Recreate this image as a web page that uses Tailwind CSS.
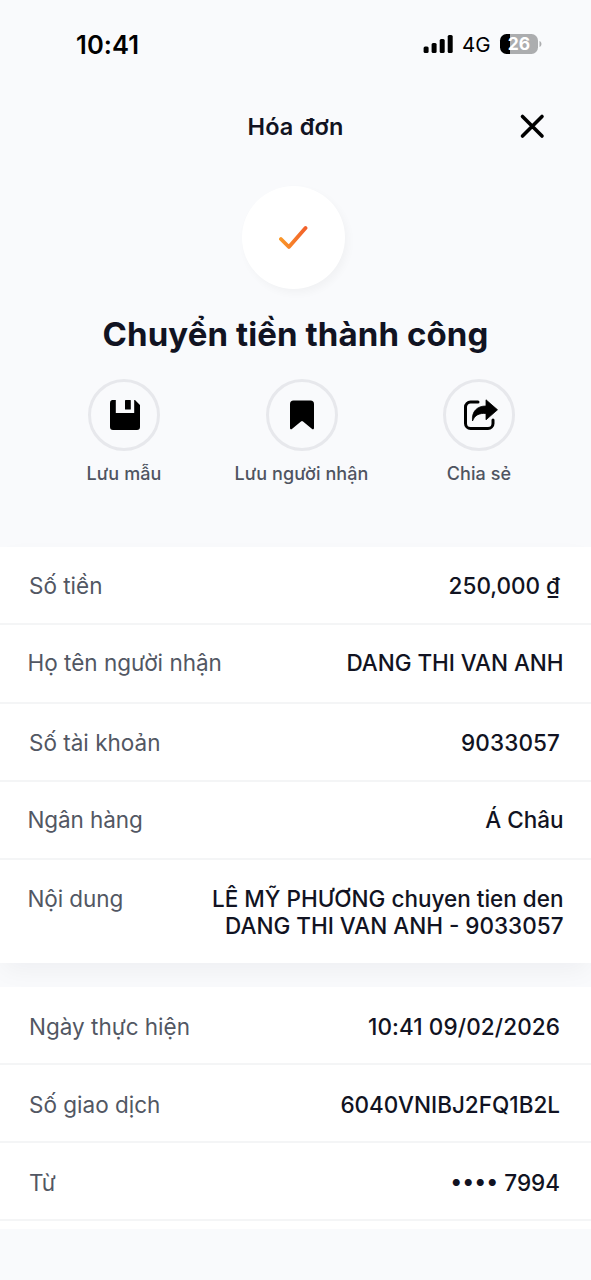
<!DOCTYPE html>
<html lang="vi">
<head>
<meta charset="utf-8">
<title>Hóa đơn</title>
<script src="https://cdn.jsdelivr.net/npm/@tailwindcss/browser@4"></script>
</head>
<body class="w-[591px] h-[1280px] overflow-hidden bg-[#f9fafc] text-[#111322] font-['Inter',sans-serif] flex flex-col">
  <!-- Status bar -->
  <header class="h-[88px] shrink-0 flex items-center justify-between pl-[76px] pr-[49px] text-black">
    <span class="text-[25.5px] leading-[30px] pt-px tracking-[0.1px] font-semibold">10:41</span>
    <div class="flex items-center">
      <svg class="w-[30px] h-[20px]" viewBox="0 0 30 20"><rect x=".6" y="12.500" width="5" height="6.500" rx="1.500"/><rect x="8.600" y="9" width="5" height="10" rx="1.500"/><rect x="16.700" y="5" width="5" height="14" rx="1.500"/><rect x="24.700" y="1" width="5" height="18" rx="1.500"/></svg>
      <span class="ml-[9px] w-[30px] pt-px text-[20.5px] leading-6 whitespace-nowrap">4G</span>
      <div class="ml-2 w-[38px] h-[20px] rounded-[6.5px] overflow-hidden bg-linear-to-r from-black from-[27%] to-[#acadaf] to-[27%] flex items-center justify-center text-[17.5px] leading-5 font-bold text-white">26</div>
      <svg class="ml-[1px] w-[3px] h-2" viewBox="0 0 3 8"><path d="M.5 1C3.100 2.200 3.100 5.800.5 7Z" fill="#acadaf"/></svg>
    </div>
  </header>

  <!-- Title bar -->
  <div class="h-[78px] shrink-0 grid grid-cols-[1fr_auto_1fr] items-center px-[45px]">
    <h1 class="col-start-2 text-[23.5px] leading-7 tracking-[0.2px] font-semibold">Hóa đơn</h1>
    <svg class="justify-self-end w-[28px] h-[28px]" viewBox="0 0 28 28" fill="none" stroke="#000" stroke-width="3.600" stroke-linecap="round"><path d="M4.500 3.500 24 23M24 3.500 4.500 23"/></svg>
  </div>

  <!-- Result -->
  <section class="h-[381px] shrink-0 flex flex-col items-center pt-5">
    <div class="w-[103px] h-[103px] -ml-[4px] rounded-full bg-white shadow-[3px_4px_8px_rgba(17,24,39,0.035)] flex items-center justify-center">
      <svg class="w-[30px] h-[26px]" viewBox="0 0 30 26" fill="none"><defs><linearGradient id="tick" x1="0" y1="0" x2="30" y2="0" gradientUnits="userSpaceOnUse"><stop stop-color="#fa9a28"/><stop offset="1" stop-color="#f15a2b"/></linearGradient></defs><path d="M1.900 14 9.900 22 26.500 3" stroke="url(#tick)" stroke-width="3.800" stroke-linecap="round" stroke-linejoin="round"/></svg>
    </div>
    <h2 class="mt-[25px] text-[33px] leading-[40px] tracking-[0.1px] font-bold whitespace-nowrap">Chuyển tiền thành công</h2>
    <div class="mt-[25px] flex w-full justify-center pl-3 text-[18px] leading-6 font-[450] tracking-[0.1px] text-[#4f5461]">
      <div class="w-[177px] flex flex-col items-center gap-[11px]">
        <div class="w-[72px] h-[72px] rounded-full border-[3px] border-[#e7e8ec] flex items-center justify-center pl-[2px]">
          <svg class="w-[32px] h-[32px]" viewBox="0 0 32 32"><path d="M3 1h3.800v13h18.400V1H26l5 5v22a3 3 0 0 1-3 3H4a3 3 0 0 1-3-3V4a3 3 0 0 1 2-3Z"/><rect x="16" y="1" width="5.800" height="9.500" rx=".6"/></svg>
        </div>
        <span>Lưu mẫu</span>
      </div>
      <div class="w-[178px] flex flex-col items-center gap-[11px]">
        <div class="w-[72px] h-[72px] rounded-full border-[3px] border-[#e7e8ec] flex items-center justify-center">
          <svg class="w-[24px] h-[30px]" viewBox="0 0 24 30"><path d="M3.500.5h17A3.500 3.500 0 0 1 24 4v24c0 1.400-1.200 1.800-2.200.8L13 21.500q-1-.8-2 0l-8.800 7.300C1.200 29.800 0 29.400 0 28V4A3.500 3.500 0 0 1 3.500.5Z"/></svg>
        </div>
        <span class="whitespace-nowrap">Lưu người nhận</span>
      </div>
      <div class="w-[177px] flex flex-col items-center gap-[11px]">
        <div class="w-[72px] h-[72px] rounded-full border-[3px] border-[#e7e8ec] flex items-center justify-center pl-[3px]">
          <svg class="w-[34px] h-[32px]" viewBox="0 0 34 32"><path d="M14 3H6.500a5 5 0 0 0-5 5v16.500a5 5 0 0 0 5 5H24a5 5 0 0 0 5-5V21" fill="none" stroke="#000" stroke-width="3" stroke-linecap="round"/><path d="M22 .8 33.500 10.800 22 20.800v-6.300c-7-.5-11 1.500-13.500 7.500C7.500 12.500 13 7 22 7Z" stroke="#000" stroke-width=".8" stroke-linejoin="round"/></svg>
        </div>
        <span>Chia sẻ</span>
      </div>
    </div>
  </section>

  <!-- Recipient details -->
  <dl class="relative h-[416px] shrink-0 bg-white shadow-[0_10px_24px_-4px_rgba(17,24,39,0.05)] text-[22.5px] leading-[27px]">
    <div class="h-[78px] border-b-2 border-[#f4f5f6] flex items-center justify-between pl-[29px] pr-[31px]"><dt class="text-[#525763]">Số tiền</dt><dd class="font-[450]">250,000 ₫</dd></div>
    <div class="h-[79px] pb-[2px] border-b-2 border-[#f4f5f6] flex items-center justify-between pl-[27.5px] pr-[27.5px]"><dt class="text-[#525763]">Họ tên người nhận</dt><dd class="font-[450] tracking-[-0.05px]">DANG THI VAN ANH</dd></div>
    <div class="h-[78px] border-b-2 border-[#f4f5f6] flex items-center justify-between pl-[29px] pr-[31px]"><dt class="text-[#525763]">Số tài khoản</dt><dd class="font-[450] tracking-[0.1px]">9033057</dd></div>
    <div class="h-[78px] pb-[2px] border-b-2 border-[#f4f5f6] flex items-center justify-between pl-[27.5px] pr-[27.5px]"><dt class="text-[#525763] tracking-[-0.1px]">Ngân hàng</dt><dd class="font-[450]">Á Châu</dd></div>
    <div class="pt-[25px] flex justify-between pl-[27.5px] pr-[27.5px]"><dt class="text-[#525763] tracking-[-0.1px]">Nội dung</dt><dd class="font-[450] text-right whitespace-nowrap">LÊ MỸ PHƯƠNG chuyen tien den<br>DANG THI VAN ANH - 9033057</dd></div>
  </dl>

  <!-- Transaction details -->
  <dl class="relative mt-6 h-[242px] shrink-0 bg-white text-[22.5px] leading-[27px]">
    <div class="h-[78px] pt-[3px] border-b-2 border-[#f4f5f6] flex items-center justify-between pl-[29px] pr-[31px]"><dt class="text-[#525763]">Ngày thực hiện</dt><dd class="font-[450] tracking-[0.1px]">10:41 09/02/2026</dd></div>
    <div class="h-[78px] pt-[3px] border-b-2 border-[#f4f5f6] flex items-center justify-between pl-[29px] pr-[31px]"><dt class="text-[#525763]">Số giao dịch</dt><dd class="font-[450]">6040VNIBJ2FQ1B2L</dd></div>
    <div class="h-[78px] pt-[3px] border-b-2 border-[#f4f5f6] flex items-center justify-between pl-[29px] pr-[31px]"><dt class="text-[#525763]">Từ</dt><dd class="font-[450]">•••• 7994</dd></div>
  </dl>
</body>
</html>
